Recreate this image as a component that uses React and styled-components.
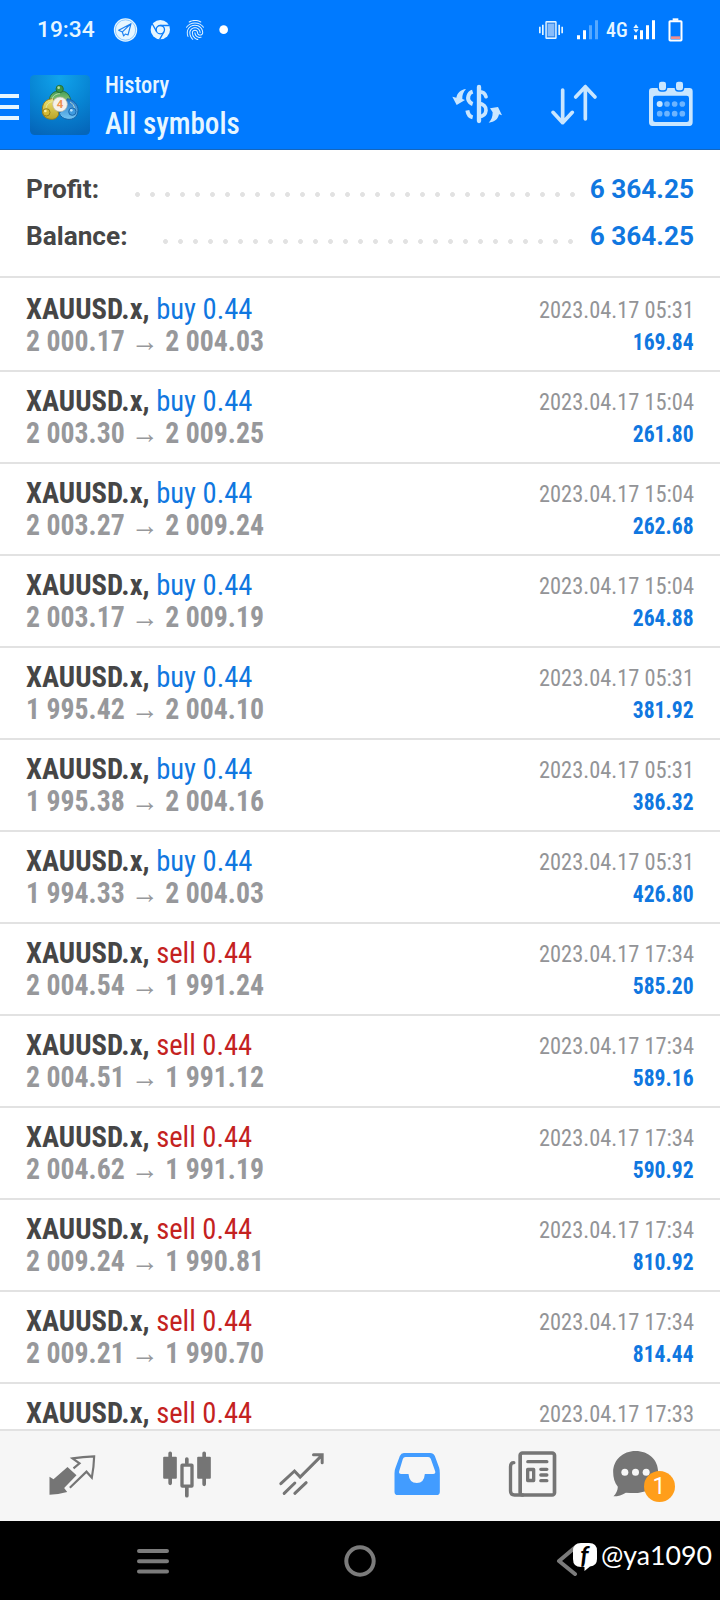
import React from "react";
import styled, { createGlobalStyle } from "styled-components";
import { MdFingerprint } from "react-icons/md";

const GlobalStyle = createGlobalStyle`
    * {
        box-sizing: border-box;
    }
    body {
        margin: 0;
        background-color: #fff;
        font-family: Roboto, "Liberation Sans", sans-serif;
    }
    svg {
        display: block;
        flex: none;
    }
`

const Screen = styled.div`
    position: relative;
    width: 720px;
    height: 1600px;
    display: flex;
    flex-direction: column;
    overflow: hidden;
    background-color: #fff;
`

// narrow text, squeezed a bit more than the condensed width of the font
const Narrow = styled.span`
    display: inline-block;
    font-stretch: 75%;
    white-space: pre;
    transform: scaleX(${(props) => props.$scale});
    transform-origin: ${(props) => props.$origin || "left"} center;
`

const Header = styled.header`
    height: 150px;
    flex: none;
    background-color: #007aff;
    border-bottom: 1px solid #1566bd;
`

const StatusBar = styled.div`
    height: 60px;
    padding: 0 36px 0 37px;
    display: flex;
    align-items: center;
    color: #e6f6ff;
`

const Clock = styled.span`
    width: 76px;
    font-size: 22.7px;
    font-weight: 500;
    line-height: 58px;
`

const Notices = styled.div`
    flex: 1;
    display: flex;
    align-items: center;
    gap: 12px;
`

const Signals = styled.div`
    display: flex;
    align-items: center;
`

const Network = styled.span`
    width: 34px;
    padding: 0 0 0 7px;
    font-size: 20.5px;
    font-weight: 500;
`

const Toolbar = styled.div`
    height: 90px;
    display: flex;
    align-items: center;
    padding-right: 26px;
`

const MenuButton = styled.div`
    width: 19px;
    margin: 3px 11px 0 0;
    display: grid;
    gap: 7px;
`

const MenuLine = styled.span`
    height: 4px;
    background-color: #e6f6ff;
`

const Titles = styled.div`
    flex: 1;
    padding: 5px 0 0 15px;
    color: #e6f6ff;
    font-weight: 460;
`

const ScreenName = styled.div`
    font-size: 24px;
    line-height: 31px;
`

const Filter = styled.div`
    font-size: 32px;
    line-height: 45px;
`

const Actions = styled.div`
    display: flex;
    align-items: center;
    gap: 46px;
`

const Summary = styled.div`
    height: 128px;
    flex: none;
    padding: 16px 26px 0;
    border-bottom: 2px solid #e2e2e2;
`

const SummaryRow = styled.div`
    height: 47px;
    display: flex;
    align-items: center;
    font-size: 26.2px;
    font-weight: 700;
    line-height: 47px;
    color: #464646;
`

const Dots = styled.div`
    flex: none;
    width: ${(props) => props.$count * 15}px;
    height: 5px;
    margin: 10px ${(props) => props.$gap}px 0 auto;
    background: radial-gradient(circle at center, #e2e2e2 2.1px, transparent 2.7px) 0 0 / 15px 5px;
`

const Amount = styled.span`
    color: #1077e0;
`

const Deals = styled.main`
    flex: 1;
    min-height: 0;
    padding-top: 2px;
    overflow: hidden;
`

const Deal = styled.div`
    height: 92px;
    padding: 14px 26px 0;
    display: flex;
    justify-content: space-between;
    border-bottom: 2px solid #e2e2e2;
`

const Right = styled.div`
    text-align: right;
`

const Symbol = styled.div`
    font-size: 30px;
    font-weight: 700;
    line-height: 30px;
    color: #464646;
`

const Side = styled.span`
    font-weight: 430;
    color: ${(props) => (props.$side === "buy" ? "#1077e0" : "#c4221f")};
`

const Prices = styled.div`
    font-size: 30px;
    font-weight: 700;
    line-height: 34px;
    color: #97989b;
`

const Time = styled.div`
    font-size: 24px;
    line-height: 32px;
    color: #939497;
`

const Profit = styled.div`
    font-size: 24px;
    font-weight: 700;
    line-height: 33px;
    color: #1077e0;
`

const TabBar = styled.nav`
    height: 92px;
    flex: none;
    padding: 0 16px 2px 14px;
    display: grid;
    grid-template-columns: repeat(6, 115px);
    align-items: center;
    justify-items: center;
    background-color: #f6f6f6;
    border-top: 2px solid #e2e2e2;
`

const ChatTab = styled.div`
    position: relative;
`

const Badge = styled.span`
    position: absolute;
    left: 32px;
    top: 21px;
    width: 31px;
    height: 31px;
    border-radius: 50%;
    background-color: #ff9e1b;
    color: #fff;
    font-size: 23px;
    line-height: 32px;
    text-align: center;
`

const SystemBar = styled.div`
    height: 79px;
    flex: none;
    display: grid;
    grid-template-columns: 306px 108px 306px;
    align-items: center;
    justify-items: center;
    background-color: #000;
`

const Watermark = styled.div`
    position: absolute;
    left: 572px;
    top: 1536px;
    display: flex;
    align-items: center;
    gap: 3px;
    color: #fff;
    font-family: Lato, sans-serif;
    font-size: 27.5px;
    line-height: 38px;
`

const deals = [
    ["buy", "2 000.17", "2 004.03", "05:31", "169.84"],
    ["buy", "2 003.30", "2 009.25", "15:04", "261.80"],
    ["buy", "2 003.27", "2 009.24", "15:04", "262.68"],
    ["buy", "2 003.17", "2 009.19", "15:04", "264.88"],
    ["buy", "1 995.42", "2 004.10", "05:31", "381.92"],
    ["buy", "1 995.38", "2 004.16", "05:31", "386.32"],
    ["buy", "1 994.33", "2 004.03", "05:31", "426.80"],
    ["sell", "2 004.54", "1 991.24", "17:34", "585.20"],
    ["sell", "2 004.51", "1 991.12", "17:34", "589.16"],
    ["sell", "2 004.62", "1 991.19", "17:34", "590.92"],
    ["sell", "2 009.24", "1 990.81", "17:34", "810.92"],
    ["sell", "2 009.21", "1 990.70", "17:34", "814.44"],
    ["sell", null, null, "17:33", null],
];

const TelegramIcon = () => (
    <svg width="25" height="26" viewBox="339 50 75 78">
        <circle cx="376.500" cy="89" r="35" fill="#e6f6ff" />
        <circle cx="376.500" cy="89" r="30.500" fill="none" stroke="#5fb0ff" strokeWidth="2" />
        <path d="M393 70 L356 90 L367 95 L371 107 L376 101 L384 104 Z M393 70 L368 94" fill="none" stroke="#1b7ff0" strokeWidth="3.500" strokeLinejoin="round" />
    </svg>
)

const ChromeIcon = () => (
    <svg width="21" height="26" viewBox="450 50 63 78">
        <circle cx="481" cy="88" r="29" fill="#e6f6ff" />
        <g fill="none" stroke="#0a7dfb" strokeWidth="4">
            <circle cx="481" cy="88" r="12.500" />
            <path d="M481 75.500 H508 M470 94 L457 71 M492 94 L479 117" />
        </g>
    </svg>
)

const VibrateIcon = () => (
    <svg width="26" height="26" viewBox="534 50 78 78">
        <rect x="558" y="64" width="30" height="50" rx="2" fill="#86bcfb" stroke="#e6f6ff" strokeWidth="4" />
        <rect x="562" y="69" width="22" height="40" fill="none" stroke="#2d83e8" strokeWidth="2.500" />
        <path d="M539.500 79 V99 M548.500 73 V104 M597.500 73 V104 M606.500 79 V99" stroke="#e6f6ff" strokeWidth="5" />
    </svg>
)

const SignalIcon = ({ full }) => (
    <svg width="23" height="26" viewBox="648 50 69 78">
        <path d="M651 105 h9 v12 h-9 Z M669 90 h9 v27 h-9 Z" fill="#fff" />
        <path d="M687 75 h9 v42 h-9 Z M705 60 h9 v57 h-9 Z" fill={full ? "#fff" : "#57a9ff"} />
        {full && <path d="M649 83 L657 72 L665 83 Z M649 87 H665 L657 97 Z" fill="#e6f6ff" />}
    </svg>
)

const BatteryIcon = () => (
    <svg width="17" height="26" viewBox="921 50 51 78">
        <path d="M938 54 h17 v7 h-17 Z" fill="#fff" />
        <rect x="928.500" y="62.500" width="36" height="58" rx="2" fill="none" stroke="#fff" strokeWidth="6" />
        <rect x="933" y="108" width="27" height="8" fill="#ef8d8d" />
    </svg>
)

const AppIcon = () => (
    <svg width="60" height="60" viewBox="18 15 180 180">
        <defs>
            <radialGradient id="tile" cx="50%" cy="5%" r="100%">
                <stop offset="0" stopColor="#11a4ec" />
                <stop offset="0.55" stopColor="#0783d2" />
                <stop offset="1" stopColor="#0566ba" />
            </radialGradient>
            <linearGradient id="green" x1="0" y1="0" x2="0" y2="1">
                <stop offset="0" stopColor="#3f9a55" />
                <stop offset="1" stopColor="#9fd07c" />
            </linearGradient>
            <linearGradient id="yellow" x1="0" y1="0" x2="0" y2="1">
                <stop offset="0" stopColor="#efe06c" />
                <stop offset="1" stopColor="#b9a428" />
            </linearGradient>
            <linearGradient id="blue" x1="0" y1="0" x2="0" y2="1">
                <stop offset="0" stopColor="#2274c4" />
                <stop offset="1" stopColor="#74c6f4" />
            </linearGradient>
        </defs>
        <rect x="18" y="15" width="180" height="180" rx="14" fill="url(#tile)" />
        <g strokeWidth="3">
            <path d="M76 96 C74 74 90 62 108 62 C127 62 141 76 140 96 L122 100 L94 100 Z" fill="url(#green)" stroke="#26723f" />
            <path d="M88 86 C68 86 55 98 55 118 C54 138 66 149 86 148 C96 147 102 140 104 132 L98 106 Z" fill="url(#yellow)" stroke="#8f7d22" />
            <path d="M130 86 C150 90 163 104 162 122 C160 141 148 149 132 148 C118 147 109 139 106 130 L120 112 Z" fill="url(#blue)" stroke="#1762a8" />
            <path d="M84 92 C84 78 96 71 108 71 M66 118 C66 104 74 96 86 95 M152 116 C150 106 146 100 138 96" fill="none" stroke="#dff0c8" strokeOpacity="0.7" />
            <circle cx="107" cy="57" r="11" fill="#3c9448" stroke="#24703a" />
            <circle cx="67" cy="127" r="11" fill="#d5ba35" stroke="#94801f" />
            <circle cx="145" cy="125" r="11" fill="#3f9be0" stroke="#1c68ac" />
        </g>
        <circle cx="104" cy="53" r="4" fill="#b5e0a4" />
        <circle cx="64" cy="123" r="4" fill="#fff1a6" />
        <circle cx="142" cy="121" r="4" fill="#b9e2fb" />
        <circle cx="108" cy="103" r="22" fill="#f5f1ea" stroke="#b9b7a6" strokeWidth="2" />
        <text x="108" y="115" textAnchor="middle" fontSize="34" fontWeight="700" fill="#ee9250">4</text>
    </svg>
)

const CurrencyIcon = () => (
    <svg width="54" height="50" viewBox="270 240 162 150">
        <g fill="none" stroke="#c9e6ff" strokeLinecap="round">
            <path d="M357 261 V363" strokeWidth="13" />
            <path d="M357 276 C368 275 375 280 378 290 M357 310 C371 312 379 320 378 331 C377 343 370 349 357 350" strokeWidth="11" />
            <path d="M338 275 C325 279 320 295 329 306 C332 309 335 311 338 312 M322 331 C324 343 329 350 338 352" strokeWidth="12" strokeLinecap="butt" />
        </g>
        <path d="M318 267 C302 269 292 278 289 293 L277 290 L290 315 L315 300 L307 297 C306 286 310 276 318 267 Z" fill="#c9e6ff" />
        <path d="M386 368 C404 366 414 358 417 343 L426 346 L414 321 L390 325 L398 337 C398 351 394 360 386 368 Z" fill="#c9e6ff" />
    </svg>
)

const SortIcon = () => (
    <svg width="52" height="50" viewBox="570 240 156 150">
        <path d="M608 270 V368 M579 337 L608 368 L637 337 M676 357 V260 M647 291 L676 260 L705 291" fill="none" stroke="#c9e6ff" strokeWidth="11" strokeLinecap="round" strokeLinejoin="round" />
    </svg>
)

const CalendarIcon = () => (
    <svg width="46" height="50" viewBox="864 240 138 150">
        <path d="M877 264 H988 Q998 264 998 274 V367 Q998 378 988 378 H877 Q867 378 867 367 V274 Q867 264 877 264 Z M886 287 Q879 287 879 294 V359 Q879 366 886 366 H980 Q987 366 987 359 V294 Q987 287 980 287 Z" fill="#c9e6ff" fillRule="evenodd" />
        <rect x="895" y="243" width="25" height="30" rx="9" fill="#c9e6ff" stroke="#007aff" strokeWidth="4" />
        <rect x="946" y="243" width="25" height="30" rx="9" fill="#c9e6ff" stroke="#007aff" strokeWidth="4" />
        <circle cx="899" cy="312" r="9" fill="#c9e6ff" />
        {[921, 944, 967].map((x) => <circle key={x} cx={x} cy="312" r="8.500" fill="#6cb4ff" />)}
        {[899, 921, 944, 967].map((x) => <circle key={x} cx={x} cy="341" r="8.500" fill="#6cb4ff" />)}
    </svg>
)

const QuotesIcon = () => (
    <svg width="50" height="50" viewBox="142.500 150 150 150">
        <path d="M150 230 L162 238 L204 201 L231 226 L194 264 L203 276 Q176 284 150 284 Z" fill="#757575" />
        <path d="M222 205 L240 190 L219 175 Q250 170 284 169 Q283 202 277 233 L261 215 L211 263" fill="none" stroke="#757575" strokeWidth="6.500" />
    </svg>
)

const ChartsIcon = () => (
    <svg width="50" height="50" viewBox="487.500 150 150 150">
        <g stroke="#757575" strokeWidth="11" strokeLinecap="round">
            <path d="M512 160 V250 M614 160 V253 M562 177 V190 M562 262 V287" />
        </g>
        <rect x="491" y="170" width="41" height="66" rx="3" fill="#757575" />
        <rect x="593" y="170" width="41" height="66" rx="3" fill="#757575" />
        <rect x="547.500" y="195.500" width="30" height="63" rx="1" fill="#f6f6f6" stroke="#757575" strokeWidth="10" />
    </svg>
)

const TradeIcon = () => (
    <svg width="50" height="50" viewBox="832.500 150 150 150">
        <path d="M844 251 L885 213 L902 231 L967 166 M942 164 H968 V188 M854 280 L886 249 M886 280 L920 248" fill="none" stroke="#757575" strokeWidth="9" strokeLinecap="round" />
    </svg>
)

const HistoryIcon = () => (
    <svg width="50" height="50" viewBox="97.500 150 150 150">
        <path d="M133 159 H212 Q222 159 226 168 L239 203 Q241 209 241 220 V275 Q241 285 231 285 H115 Q105 285 105 275 V220 Q105 209 108 203 L121 168 Q125 159 133 159 Z M138 171 Q132 171 130 177 L119 214 Q117 222 125 222 H147 Q149 249 172 249 Q194 249 196 222 H221 Q229 222 227 214 L214 177 Q212 171 206 171 Z" fill="#429cff" fillRule="evenodd" />
    </svg>
)

const NewsIcon = () => (
    <svg width="50" height="50" viewBox="442.500 150 150 150">
        <g fill="none" stroke="#757575" strokeLinecap="round">
            <rect x="482" y="159" width="103" height="126" rx="7" strokeWidth="11" />
            <path d="M463 188 Q453 188 453 200 V273 Q453 285 465 285 H490" strokeWidth="10" />
            <path d="M505 185 H562 M544 208 H562 M544 225 H562 M544 242 H562" strokeWidth="10" />
            <rect x="504.500" y="208.500" width="18" height="33" strokeWidth="10" strokeLinejoin="round" />
        </g>
    </svg>
)

const ChatIcon = () => (
    <svg width="70" height="50" viewBox="757.500 150 210 150">
        <path d="M828 153 C868 153 896 180 896 216 C896 253 868 279 828 279 Q812 279 799 278 C788 285 776 289 762 289 C770 281 775 270 775 260 C765 248 761 233 761 216 C761 180 790 153 828 153 Z" fill="#757575" />
        {[796, 828, 860].map((x) => <circle key={x} cx={x} cy="217" r="10.500" fill="#f6f6f6" />)}
    </svg>
)

const App = () => {
    return (
        <Screen>
            <GlobalStyle />
            <Header>
                <StatusBar>
                    <Clock>19:34</Clock>
                    <Notices>
                        <TelegramIcon />
                        <ChromeIcon />
                        <MdFingerprint size={24} />
                        <svg width="10" height="26" viewBox="657 50 30 78"><circle cx="671" cy="88" r="13" fill="#fff" /></svg>
                    </Notices>
                    <Signals>
                        <VibrateIcon />
                        <svg width="12" height="26" />
                        <SignalIcon />
                        <Network><Narrow $scale={0.97}>4G</Narrow></Network>
                        <SignalIcon full />
                        <svg width="11" height="26" />
                        <BatteryIcon />
                    </Signals>
                </StatusBar>
                <Toolbar>
                    <MenuButton>
                        <MenuLine />
                        <MenuLine />
                        <MenuLine />
                    </MenuButton>
                    <AppIcon />
                    <Titles>
                        <ScreenName><Narrow $scale={0.935}>History</Narrow></ScreenName>
                        <Filter><Narrow $scale={0.91}>All symbols</Narrow></Filter>
                    </Titles>
                    <Actions>
                        <CurrencyIcon />
                        <SortIcon />
                        <CalendarIcon />
                    </Actions>
                </Toolbar>
            </Header>
            <Summary>
                <SummaryRow>Profit:<Dots $count={30} $gap={10} /><Amount>6 364.25</Amount></SummaryRow>
                <SummaryRow>Balance:<Dots $count={28} $gap={12} /><Amount>6 364.25</Amount></SummaryRow>
            </Summary>
            <Deals>
                {deals.map(([side, open, close, time, profit], i) => (
                    <Deal key={i}>
                        <div>
                            <Symbol><Narrow $scale={0.953}>XAUUSD.x, <Side $side={side}>{side} 0.44</Side></Narrow></Symbol>
                            {open && <Prices><Narrow $scale={0.926}>{open} → {close}</Narrow></Prices>}
                        </div>
                        <Right>
                            <Time><Narrow $scale={0.934} $origin="right">2023.04.17 {time}</Narrow></Time>
                            {profit && <Profit><Narrow $scale={0.9} $origin="right">{profit}</Narrow></Profit>}
                        </Right>
                    </Deal>
                ))}
            </Deals>
            <TabBar>
                <QuotesIcon />
                <ChartsIcon />
                <TradeIcon />
                <HistoryIcon />
                <NewsIcon />
                <ChatTab>
                    <ChatIcon />
                    <Badge>1</Badge>
                </ChatTab>
            </TabBar>
            <SystemBar>
                <svg width="34" height="30" viewBox="0 0 34 30">
                    <path d="M3 5 H31 M3 15.300 H31 M3 25.600 H31" stroke="#7b7b7b" strokeWidth="4" strokeLinecap="round" />
                </svg>
                <svg width="32" height="32" viewBox="0 0 32 32">
                    <circle cx="16" cy="16" r="13.700" fill="none" stroke="#7b7b7b" strokeWidth="4" />
                </svg>
                <svg width="22" height="32" viewBox="0 0 22 32">
                    <path d="M19 2.500 L3 16 L19 29" fill="none" stroke="#7b7b7b" strokeWidth="4" strokeLinecap="round" strokeLinejoin="round" />
                </svg>
            </SystemBar>
            <Watermark>
                <svg width="26" height="32" viewBox="0 -1 26 32">
                    <path d="M9 3 H17 Q25 3 25 11 V19 Q25 26 18 26.500 L12.500 31 L12.500 27 H9 Q1 27 1 19 V11 Q1 3 9 3 Z" fill="#fff" />
                    <text x="12.500" y="24" textAnchor="middle" fontSize="25" fontWeight="700" fontStyle="italic" fill="#000">f</text>
                </svg>
                <Narrow $scale={0.97}>@ya1090</Narrow>
            </Watermark>
        </Screen>
    )
}

export default App;
